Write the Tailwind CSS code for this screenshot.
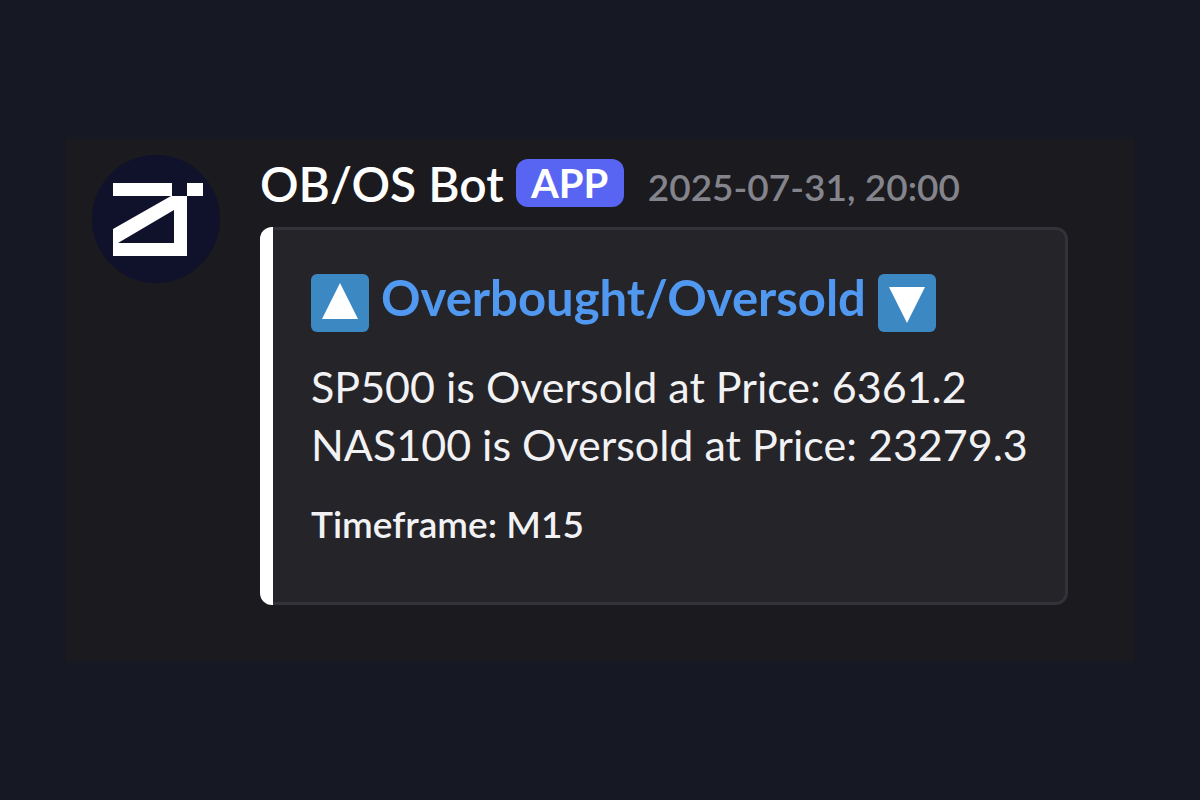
<!DOCTYPE html>
<html lang="en">
<head>
  <meta charset="UTF-8">
  <meta name="viewport" content="width=device-width, initial-scale=1.0">
  <title>OB/OS Bot</title>
  <script src="https://cdn.jsdelivr.net/npm/@tailwindcss/browser@4"></script>
</head>
<body class="bg-[#161824] font-[Lato,sans-serif] text-white">
  <main class="min-h-screen flex items-center justify-center px-[66px]">
    <!-- Message -->
    <article class="w-full flex items-start gap-10 bg-[#1b1a1e] pt-4 pr-[66px] pb-14 pl-[26px]">
      <!-- Avatar -->
      <svg class="size-32 shrink-0" viewBox="0 0 128 128" role="img" aria-label="OB/OS Bot">
        <circle cx="64" cy="64" r="64" fill="#10112b"/>
        <g fill="#fff">
          <path d="M21 28H80V41H21Z"/>
          <path d="M95 28H111V41H95Z"/>
          <path fill-rule="evenodd" d="M79 41H95V101H21V74ZM82 55L26 88H82Z"/>
        </g>
      </svg>

      <div class="flex-1 min-w-0">
        <!-- Author, badge, date -->
        <header class="h-[72px] flex items-start pt-1">
          <h1 class="text-[48px] leading-[50px] font-semibold whitespace-nowrap">OB/OS Bot</h1>
          <span class="ml-3 h-12 w-[108px] flex items-center justify-center rounded-xl bg-[#5865f2] text-[40px] font-bold">APP</span>
          <time datetime="2025-07-31T20:00" class="ml-6 text-[37px] leading-[56px] font-semibold text-[#84848c] whitespace-nowrap">2025-07-31, 20:00</time>
        </header>

        <!-- Embed -->
        <section class="flex overflow-hidden rounded-xl bg-[#252429]">
          <div class="w-[13px] shrink-0 bg-white"></div>
          <div class="flex-1 min-w-0 rounded-r-xl border-y-3 border-r-3 border-[#333238] pt-11 pb-[54px] pl-[38px]">
            <h2 class="flex items-center gap-3 text-[49px] leading-[46px] font-bold text-[#5098f0]">
              <svg class="size-[58px] shrink-0" viewBox="0 0 58 58" aria-hidden="true">
                <rect width="58" height="58" rx="6" fill="#3b88c3"/>
                <path d="M29 9L47 45H11Z" fill="#fff"/>
              </svg>
              <span class="pb-3">Overbought/Oversold</span>
              <svg class="size-[58px] shrink-0" viewBox="0 0 58 58" aria-hidden="true">
                <rect width="58" height="58" rx="6" fill="#3b88c3"/>
                <path d="M11 13H47L29 49Z" fill="#fff"/>
              </svg>
            </h2>
            <div class="mt-[26px] text-[43px] leading-[58px] text-[#f2f2f4] whitespace-nowrap">
              <p>SP500 is Oversold at Price: 6361.2</p>
              <p>NAS100 is Oversold at Price: 23279.3</p>
            </div>
            <p class="mt-[26px] text-[37px] leading-[48px] font-semibold text-[#f2f2f4]">Timeframe: M15</p>
          </div>
        </section>
      </div>
    </article>
  </main>
</body>
</html>
